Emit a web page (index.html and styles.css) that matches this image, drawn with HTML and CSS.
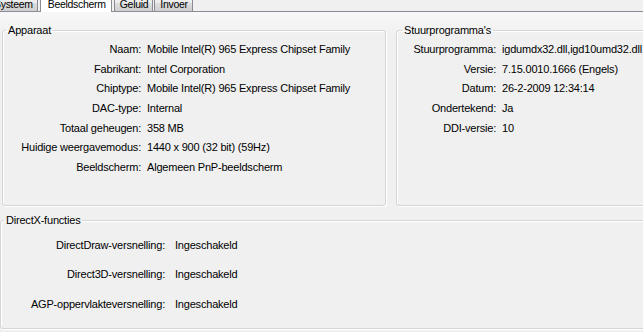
FILE: index.html
```html
<!DOCTYPE html>
<html lang="nl">
<head>
    <meta charset="UTF-8">
    <title>DirectX-diagnoseprogramma - Beeldscherm</title>
    <link rel="stylesheet" href="styles.css">
</head>
<body>
    <div class="tabs">
        <div class="tab first">Systeem</div>
        <div class="tab active">Beeldscherm</div>
        <div class="tab">Geluid</div>
        <div class="tab">Invoer</div>
    </div>

    <div class="page">
        <div class="top-row">
            <fieldset class="group device">
                <legend>Apparaat</legend>
                <div class="rows">
                    <span class="label">Naam:</span><span>Mobile Intel(R) 965 Express Chipset Family</span>
                    <span class="label">Fabrikant:</span><span>Intel Corporation</span>
                    <span class="label">Chiptype:</span><span>Mobile Intel(R) 965 Express Chipset Family</span>
                    <span class="label">DAC-type:</span><span>Internal</span>
                    <span class="label">Totaal geheugen:</span><span>358 MB</span>
                    <span class="label">Huidige weergavemodus:</span><span>1440 x 900 (32 bit) (59Hz)</span>
                    <span class="label">Beeldscherm:</span><span>Algemeen PnP-beeldscherm</span>
                </div>
            </fieldset>

            <fieldset class="group drivers">
                <legend>Stuurprogramma's</legend>
                <div class="rows">
                    <span class="label">Stuurprogramma:</span><span>igdumdx32.dll,igd10umd32.dll</span>
                    <span class="label">Versie:</span><span>7.15.0010.1666 (Engels)</span>
                    <span class="label">Datum:</span><span>26-2-2009 12:34:14</span>
                    <span class="label">Ondertekend:</span><span>Ja</span>
                    <span class="label">DDI-versie:</span><span>10</span>
                </div>
            </fieldset>
        </div>

        <fieldset class="group directx">
            <legend>DirectX-functies</legend>
            <div class="rows">
                <span class="label">DirectDraw-versnelling:</span><span>Ingeschakeld</span>
                <span class="label">Direct3D-versnelling:</span><span>Ingeschakeld</span>
                <span class="label">AGP-oppervlakteversnelling:</span><span>Ingeschakeld</span>
            </div>
        </fieldset>
    </div>
</body>
</html>
```

FILE: styles.css
```css
/* Global */
body {
    margin: 0;
    background-color: #f0f0f0;
    color: #000;
    font-family: "Liberation Sans", Arial, sans-serif;
    font-size: 11px;
    letter-spacing: -0.2px;
    overflow: hidden;
    height: 332px;
}

/* Tab strip (top is cut off by the window) */
.tabs {
    display: flex;
    align-items: flex-start;
    height: 16px;
    margin-top: -5px;
    border-bottom: 1px solid #898c95;
}

.tab {
    box-sizing: border-box;
    height: 16px;
    padding: 2px 4px 0 5px;
    line-height: 13px;
    font-size: 10.5px;
    letter-spacing: -0.3px;
    margin-right: 1px;
    border: 1px solid #898c95;
    border-bottom: none;
    background: linear-gradient(#f2f2f2, #ebebeb 50%, #dddddd 50%, #cfcfcf);
}

.tab.first {
    margin-left: -12px;
    margin-right: 2px;
}

.tab.active {
    height: 17px;
    margin-bottom: -1px;
    margin-right: 2px;
    padding: 2px 5px 0 7px;
    background: #fff;
}

/* Tab page */
.page {
    padding-top: 12px;
    background: linear-gradient(#f8f8f8, #f0f0f0 24px);
}

.top-row {
    display: flex;
    gap: 10px;
}

/* Group boxes */
.group {
    margin: 0;
    padding: 0 0 0 3px;
    border: 1px solid #d5d5d5;
    border-radius: 3px;
    box-shadow: 1px 1px 0 #fff, inset 1px 1px 0 #fff;
    min-width: 0;
}

.group legend {
    padding: 0 2px;
    line-height: 13px;
}

.rows {
    display: grid;
    column-gap: 6px;
    line-height: 19.67px;
    white-space: nowrap;
}

.label {
    text-align: right;
}

.device {
    flex: 0 0 auto;
    margin-left: 2px;
    width: 379px;
    padding-bottom: 27px;
}

.device .rows {
    grid-template-columns: 135px auto;
    padding-top: 3px;
}

.drivers {
    flex: 0 0 300px;
    padding-bottom: 27px;
}

.drivers legend {
    margin-left: 2px;
}

.drivers .rows {
    grid-template-columns: 96px auto;
    padding-top: 3px;
}

.directx {
    margin-top: 8px;
    width: 700px;
    padding-bottom: 9px;
}

.directx .rows {
    grid-template-columns: 161px auto;
    column-gap: 10px;
    line-height: 29.5px;
    padding-top: 4px;
}
```
